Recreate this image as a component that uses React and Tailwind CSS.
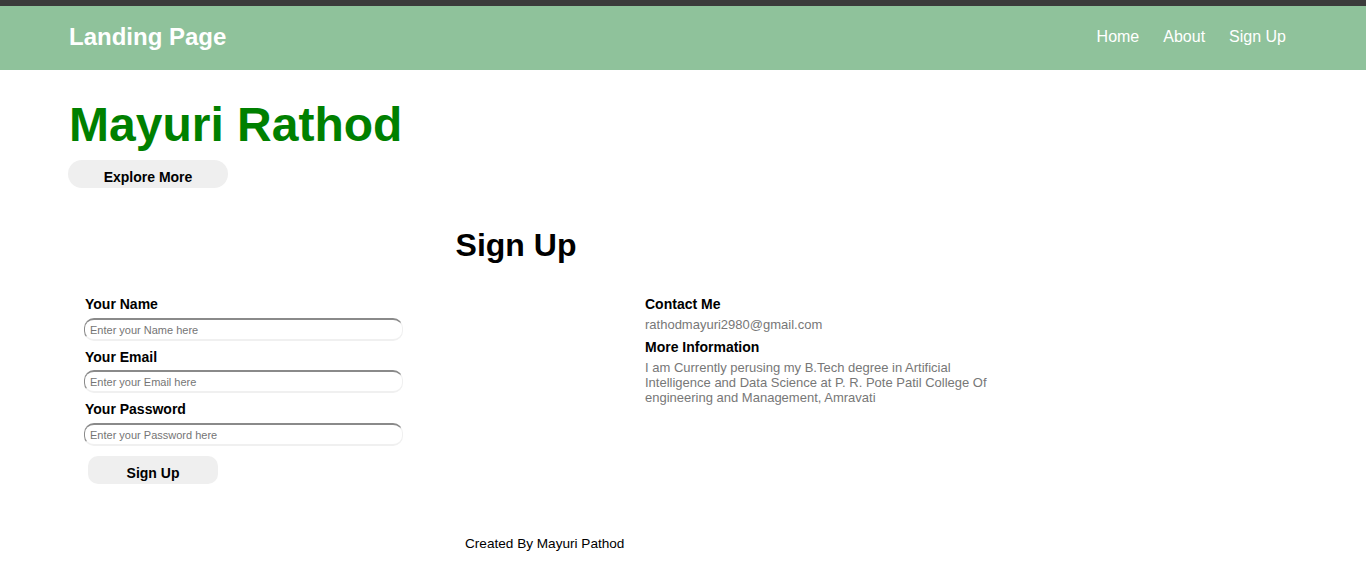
import React from 'react';

const inputCls =
  'w-[319px] h-[23px] rounded-[10px] border-t-2 border-l border-r border-b-2 border-t-[#8a8a8a] border-l-[#8a8a8a] border-r-[#f0f0f0] border-b-[#f0f0f0] px-[5px] text-[11px] text-black placeholder:text-[#757575] outline-none';

export default function App() {
  return (
    <div className="min-h-[585px] bg-white font-['Liberation_Sans',Arial,sans-serif] text-black">
      {/* top strip + navbar */}
      <div className="h-[6px] bg-[#3b3b3b]" />
      <nav className="h-[64px] bg-[#8fc29b] flex items-center justify-between pl-[69px] pr-[80px] pb-[2px]">
        <div className="text-white text-[24px] font-bold">Landing Page</div>
        <ul className="flex gap-[24px] text-white text-[16px]">
          <li>Home</li>
          <li>About</li>
          <li>Sign Up</li>
        </ul>
      </nav>

      {/* hero */}
      <section className="pl-[69px] pt-[27px]">
        <h1 className="text-[48px] leading-[55px] font-bold text-[#008000]">Mayuri Rathod</h1>
        <button className="block mt-[8px] -ml-[1px] w-[160px] h-[28px] rounded-[14px] bg-[#efefef] text-[14px] leading-[16px] font-bold pt-[6px]">
          Explore More
        </button>
      </section>

      {/* sign up */}
      <section className="mt-[39px]">
        <h2 className="w-[1032px] text-center text-[32px] leading-[37px] font-bold">Sign Up</h2>
        <div className="flex mt-[32px] pl-[85px]">
          <form className="w-[560px] flex flex-col" onSubmit={(e) => e.preventDefault()}>
            <label className="text-[14px] leading-[16px] font-bold">Your Name</label>
            <input className={`${inputCls} mt-[6px] -ml-[1px]`} placeholder="Enter your Name here" />
            <label className="mt-[8px] text-[14px] leading-[16px] font-bold">Your Email</label>
            <input className={`${inputCls} mt-[5px] -ml-[1px]`} placeholder="Enter your Email here" />
            <label className="mt-[8px] text-[14px] leading-[16px] font-bold">Your Password</label>
            <input className={`${inputCls} mt-[6px] -ml-[1px]`} placeholder="Enter your Password here" />
            <button className="mt-[10px] ml-[3px] w-[130px] h-[28px] rounded-[10px] bg-[#efefef] text-[14px] leading-[16px] font-bold pt-[6px]">
              Sign Up
            </button>
          </form>
          <div className="w-[350px]">
            <h3 className="text-[14px] leading-[16px] font-bold">Contact Me</h3>
            <p className="mt-[5px] text-[13px] leading-[15px] text-[#777777]">rathodmayuri2980@gmail.com</p>
            <h3 className="mt-[7px] text-[14px] leading-[16px] font-bold">More Information</h3>
            <p className="mt-[5px] text-[13px] leading-[15px] text-[#777777]">
              I am Currently perusing my B.Tech degree in Artificial Intelligence and Data Science at P. R. Pote Patil College Of engineering and Management, Amravati
            </p>
          </div>
        </div>
      </section>

      <footer className="mt-[52px] pl-[465px] text-[13.6px] leading-[16px]">Created By Mayuri Pathod</footer>
    </div>
  );
}
